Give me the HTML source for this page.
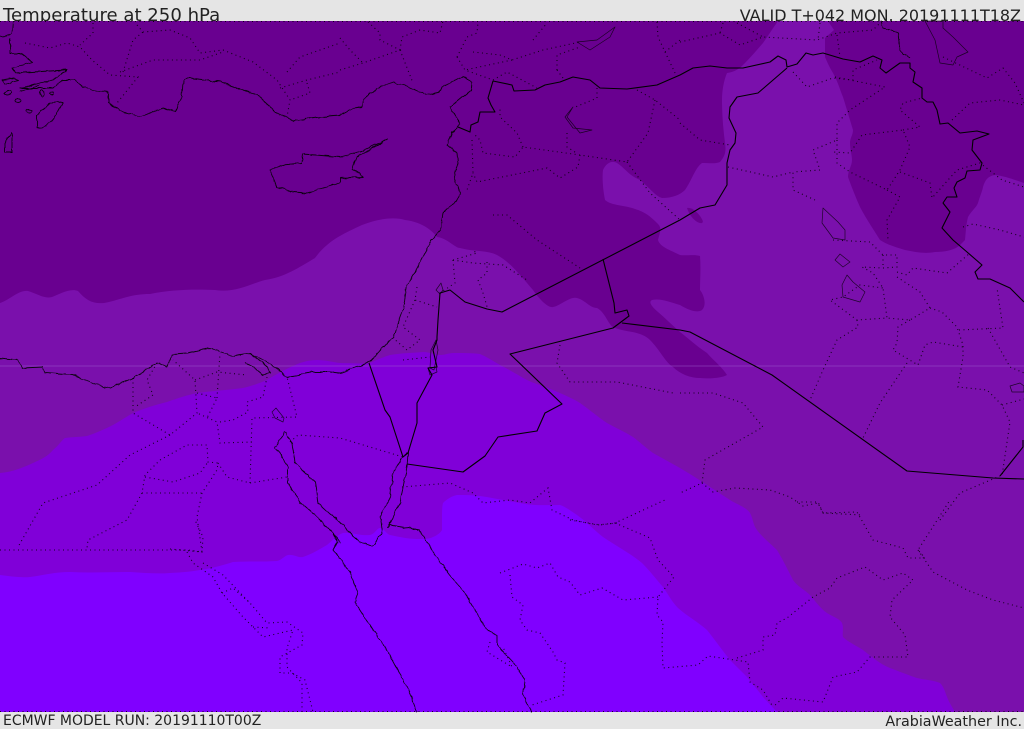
<!DOCTYPE html>
<html><head><meta charset="utf-8"><title>Temperature at 250 hPa</title>
<style>
html,body{margin:0;padding:0;background:#e5e5e5;width:1024px;height:729px;overflow:hidden}
svg{display:block}
text{font-family:"DejaVu Sans","Liberation Sans",sans-serif;fill:#222}
.c{fill:none;stroke:#000;stroke-width:.9;stroke-linejoin:round;stroke-opacity:.9}
.b{fill:none;stroke:#000;stroke-width:1.1;stroke-linejoin:round}
.l{fill:none;stroke:#000;stroke-width:.7;stroke-linejoin:round;stroke-opacity:.75}
.d{fill:none;stroke:#000;stroke-width:1.1;stroke-dasharray:1 3.5;stroke-opacity:.85}
</style></head><body>
<svg width="1024" height="729" viewBox="0 0 1024 729" xmlns="http://www.w3.org/2000/svg">
<defs><filter id="w" x="0" y="0" width="1024" height="729" filterUnits="userSpaceOnUse"><feTurbulence type="fractalNoise" baseFrequency=".14" numOctaves="2" seed="4"/><feDisplacementMap in="SourceGraphic" scale="3.5" xChannelSelector="R" yChannelSelector="G"/></filter></defs>
<rect width="1024" height="729" fill="#e5e5e5"/>
<text x="3" y="21" font-size="18.1">Temperature at 250 hPa</text>
<text x="1021" y="21" font-size="15.97" text-anchor="end">VALID T+042 MON. 20191111T18Z</text>
<text x="3" y="725" font-size="13.98">ECMWF MODEL RUN: 20191110T00Z</text>
<text x="1022" y="726" font-size="14.3" text-anchor="end">ArabiaWeather Inc.</text>
<rect x="0" y="21" width="1024" height="691" fill="#690090"/>
<path fill="#7a10ac" d="M0 303C10 300 18 290 28 291C38 294 44 299 52 297C60 294 70 288 78 291C86 300 92 304 104 303C120 300 130 294 150 294C170 290 190 289 215 290C235 293 250 284 265 280C285 277 298 268 315 258C328 240 345 233 362 225C380 218 395 217 405 220C420 222 430 228 437 237C447 238 455 248 460 248C475 252 487 250 497 255C510 262 520 275 533 290C540 300 548 308 553 307C560 306 570 296 577 298C585 300 590 308 597 308C605 312 608 324 613 327C625 333 640 330 650 340C660 350 665 362 673 367C680 374 690 378 700 378C710 379 722 378 727 375C722 367 715 362 707 353C695 345 688 338 680 332C672 325 665 318 658 312C652 307 648 302 652 300C660 298 670 302 680 305C690 311 698 313 702 310C707 305 704 295 700 290C700 280 701 268 700 256C695 254 685 256 680 255C670 250 660 247 658 240C660 232 662 228 658 224C650 216 645 212 635 209C625 205 612 206 605 200C603 190 602 178 603 170C606 163 612 160 617 163C625 168 628 175 640 180C650 188 655 196 662 198C672 198 680 195 685 190C692 180 695 168 702 163C710 163 715 164 720 162C726 155 726 150 725 143C723 128 722 112 722 100C722 90 724 80 727 73C735 72 740 68 743 65C750 58 757 50 763 43C768 36 773 28 778 21L828 21L834 30L825 38L825 57C828 64 830 68 833 73C838 82 840 90 843 97C847 110 850 120 853 130C853 135 850 138 850 143C850 150 852 155 852 160C852 166 848 170 848 177C852 188 856 198 860 207C868 222 874 230 880 240C888 245 895 247 905 250C915 252 925 254 935 252C945 252 955 250 960 245L965 240C966 230 966 225 968 217C972 210 976 208 978 203C980 196 982 192 983 187C985 180 988 176 995 175C1005 176 1015 180 1024 183L1024 712L0 712Z"/>
<path fill="#690090" d="M687 208C692 207 697 212 700 216C702 219 704 222 702 223C697 224 690 217 687 208Z"/>
<path fill="#8000d8" d="M0 473C12 472 22 468 33 463C42 459 48 456 53 450C58 446 62 440 65 438C72 437 80 437 87 436C96 433 105 429 113 425C120 421 126 417 133 413C145 408 155 405 167 402C178 398 188 395 197 393C212 391 228 390 243 388C252 386 260 383 267 380C278 373 290 367 300 363C306 361 311 360 317 360C325 360 332 362 340 363C350 363 360 364 370 363C377 360 383 357 390 355C402 353 412 353 423 352C430 352 435 355 440 355C445 355 449 353 453 353C462 353 472 353 480 354C487 357 493 361 500 365C510 370 518 375 527 380C535 384 544 386 553 390C562 394 572 398 580 403C590 410 598 417 607 423C616 428 625 432 633 437C640 442 646 448 653 453C662 458 671 463 680 468C697 478 713 489 730 500C738 505 746 507 750 513C753 518 753 525 757 530C763 538 770 543 777 550C783 560 788 570 793 580C798 587 805 590 810 595C816 602 821 609 827 613C833 617 839 618 842 623C844 628 842 633 843 637C848 642 857 646 863 650C872 657 880 664 890 668C898 671 908 675 917 678C925 680 933 680 940 683C944 687 945 692 947 697C949 702 952 707 955 712L0 712Z"/>
<path fill="#8000ff" d="M0 575C10 576 20 578 30 577C45 575 55 572 70 572C90 573 110 572 130 572C145 573 158 574 170 573C195 572 215 568 233 562C248 561 262 562 277 561C282 560 284 556 288 555C294 554 298 558 303 557C312 554 320 549 327 545C333 540 337 535 343 533C352 532 360 536 370 535C375 534 377 528 380 528C384 528 386 534 390 535C400 537 408 539 417 539C424 539 430 539 433 537C438 535 441 532 442 530L442 520C442 512 442 507 443 503C447 499 452 496 457 495C465 495 472 495 480 496C494 498 507 501 520 503C534 506 547 505 560 505C566 507 571 511 577 515C587 522 595 531 603 537C616 546 630 553 642 563C650 571 656 579 663 587C668 594 672 602 678 608C687 616 698 622 707 630C715 640 722 650 730 660C736 666 741 671 747 677C752 684 758 690 763 697L777 712L0 712Z"/>
<rect x="0" y="365.5" width="1024" height="1" fill="#a060d0" opacity=".45"/>
<g class="d">
<path d="M0 21.5H1024M0 711.5H1024"/>
<path d="M25 43L50 48L67 43L80 47L92 60L110 75L138 77L117 103M93 23V33L80 45M137 25L143 32L170 30L190 38L200 53L223 50L253 62L277 80L290 100L287 117M123 72L133 40L143 32M120 72L153 60L200 60L223 52M287 72L300 57L340 43M280 88L307 80L340 72M307 83L310 93L290 100"/>
<path d="M340 70L363 63L400 50L380 40V33L368 22M400 50L402 37L420 30L440 33L443 21M400 50L413 83M340 38L350 50L363 63M457 57L467 37L477 33L478 22M457 57L465 70L493 80L507 72L537 88M473 52L500 55L512 60L543 50L580 42M512 60L465 70M557 70V55L580 47M533 40L547 23M563 78L557 70M597 88V98L573 108M637 90L655 100L680 120M655 100L648 133L627 162L580 155L523 147L515 157L483 153L480 140L475 135M523 147L517 133L500 117V107M472 140L473 173L467 190M580 155L578 167L560 178L547 168L477 182L473 173M567 133V147L578 154M627 162L650 193L680 220M657 22L658 37L675 73M665 52L680 40M493 215H507L537 240L580 268"/>
<path d="M680 42L720 33L740 45L763 37L817 40L837 33L873 30L880 23M723 23L720 33M737 23L763 37M837 35L840 57M820 23L818 40M793 72L807 87L833 78L853 80V70L877 60M835 77L885 87L850 110L837 123V140L813 150L820 170L793 172M728 167L773 177L793 172V190L815 200M837 140V163L850 172L887 190L900 170L910 147L903 130L862 135L850 153L833 152M903 130L920 127L900 110L903 103L922 98M952 120L970 103L1000 100L1024 105M887 190L900 197L887 220L888 240M900 172L930 183L932 198L957 170L980 163L1002 180L1024 187M943 57L987 78L1003 68L1015 83L1024 103M963 227L973 224L1000 230L1024 237M680 123L700 140L730 145"/>
<path d="M833 240L870 242L883 255H897V267L883 268L862 267L873 273L883 288L887 318L857 320L830 300L843 297L860 285L883 288M883 255V268M897 272L907 275L913 268L947 273L970 253M897 277L920 292L930 308L910 320L887 318M930 308L942 312L957 327L963 345V357L958 387L987 390L1002 405L1010 422L1002 476M910 320L898 327L897 343L893 350L918 365L925 345L933 342L963 347M907 363L880 403L862 440M857 320L858 327L837 340L823 370L810 400M959 330L1003 328L997 288M988 328L1010 367L1024 373M1002 405L1024 399M680 393H713L743 403L763 427L705 460L702 483L680 493M702 483L713 492L735 488L770 490L790 497L803 506L818 503L823 513L862 515M940 520L960 493L1000 476M560 345L557 363L570 382L617 382L673 393"/>
<path d="M570 520L600 525L615 523L665 500M615 523L650 538L658 560L674 577L658 597L657 615L663 622L662 643L663 668L698 665L708 656L748 662L750 682L763 690L773 707M658 597L623 600L602 588L580 595L570 582M737 658L763 650V637L775 635L777 623L787 618L813 597L830 588L837 578L865 567L883 580L903 573L913 580L892 600L890 617L905 635L908 657H870L857 672L833 677L823 702L783 698L773 707M797 502H818L823 513L857 512L873 540L903 548L908 558H925L918 550L950 500M918 550L933 572L967 590L993 600L1024 608"/>
<path d="M170 549L202 552L203 537L195 520M187 552L193 563L213 577L222 593L243 617L263 637L293 630L287 648V667L302 683V712M203 563L223 575L250 603L267 623L287 622L303 633L302 645L280 657V673L292 673L305 680L313 712M222 593L233 588L250 603M253 627L270 628M490 642L487 652L512 667L503 647M500 573L523 564L537 568L550 563L558 577L570 582M510 575L512 597L523 605L520 620L527 630L540 633L553 652L557 660L565 663L563 695L532 705"/>
<path d="M133 378V413L170 435L197 413L195 380L173 360M157 363L147 380L153 395L135 407M170 435L130 455L97 485L43 503L18 547M0 550H188L202 552L197 517L202 493L217 470L218 463L208 462L207 445H187L160 460L145 475L142 493L127 520L88 540L87 548M145 477L173 482L200 473L208 462M142 493H202M218 463L227 477L250 483L287 477M250 483L252 418L297 417L287 377M252 442L220 443L217 422L197 413M220 422L233 420L248 412L247 402L263 397L267 377M217 398L220 353M197 393L217 398L207 418M195 380L217 372L247 375M290 442L298 435L340 438L403 457"/>
<path d="M402 487L450 483L473 493L483 503L510 500L530 503L548 488L552 510L573 520L597 525L617 523M417 287L415 300L437 307M415 300L403 327L420 340L407 350L393 338M403 360L430 357M453 260L455 283L440 293M453 260L473 263L503 265L527 280M487 262V273L478 280L483 293L488 310M453 260L477 253L472 250"/>
</g>
<g class="c" filter="url(#w)">
<path d="M13 21L12 33L3 37L0 36M10 38L10 53L20 53L32 62L13 68L15 73L67 70L53 80L20 88L53 88L63 80L75 80L83 87L95 90L108 92V103L122 112L140 117L163 108L175 112L182 97L183 80L190 78L220 82L257 95L277 113L293 121L317 117L340 115L353 108L362 107L363 100L377 88L393 82L407 86L427 95L440 92L442 87L463 76L472 83L471 90L450 107L460 123L457 128L452 132L447 145L457 153L458 163L454 177L460 193L457 200L443 213L440 230L432 240L415 272L407 285L403 310L393 337L370 362L340 373L330 372L313 372L287 377L272 365L250 353L233 356L210 348L187 353L173 354L167 367L157 363L133 378L110 388L93 383L72 375L45 373L43 367L23 368L17 360L0 358"/>
<path d="M270 170L283 165L302 163L303 154L340 157L360 152L388 139L357 157L353 168L363 177L340 178V183L307 193L293 192L277 187Z"/>
<path d="M63 102L50 103L37 115V127L42 128L53 120ZM12 132L5 143V152H12ZM18 80L5 84L2 80L14 78ZM20 91L40 85"/>
<ellipse cx="8" cy="93" rx="3" ry="2"/><ellipse cx="18" cy="101" rx="3" ry="2"/><ellipse cx="29" cy="111" rx="3" ry="1.5"/><ellipse cx="42" cy="93" rx="2" ry="3"/><ellipse cx="52" cy="93" rx="2" ry="1.5"/>
<path d="M245 362L257 370L263 375L270 373L268 367L250 353"/>
<path d="M285 432L275 447L288 467V483L300 502L313 513L333 533L340 543M285 432L292 443L295 463L315 482L318 503L340 523L360 542L372 546L380 535L382 533L380 517L390 497L393 473L403 457L408 453L407 467L400 503L388 528L390 525L420 530L433 552L450 575L463 590L487 630L497 635V645L513 662L525 680L523 695L532 712"/>
<path d="M333 533L337 542L333 550L350 572L358 592L355 602L373 630L390 655L410 693L417 712"/>
<path d="M881 21L883 28L898 33L900 50L910 58"/>
</g>
<g class="b">
<path d="M458 127L470 132L471 125L478 122L480 112H495L491 105L488 98L493 81L512 85L514 91L535 90L545 85L560 82L573 77L590 80L600 88L627 89L657 85L680 75L693 68L710 66L727 68L743 68L770 62L778 56L786 60L787 67L797 64L806 53L813 55L823 53L843 59L860 62L873 56L882 60L880 68L886 73L900 63L910 63V68L915 72L913 82L922 88V98L927 102H933L937 110L940 124L948 123L960 133L977 131L989 134L973 140L972 150L982 163L980 170L967 171L965 178L957 182L954 188L957 197H947L943 203L950 212L942 228L953 240L967 252L982 265L975 272L978 279H990L1010 288L1024 302"/>
<path d="M787 68L758 93L737 97L730 107L729 118L736 133L735 143L730 150L727 163V185L715 205L700 208L680 220L502 312L487 309L465 302L450 290L440 293L438 320L437 337V340L433 350L437 367L428 368L432 375L417 403V423L408 453L403 457L390 417L385 410L369 363"/>
<path d="M407 464L463 472L485 456L498 437L537 431L545 413L562 404L510 354L613 328L629 316L627 310L615 313L614 303L603 259M622 323L680 330L690 332L772 375L907 471L993 478L1024 479M1000 476L1023 447V440"/>
</g>
<g class="l">
<path d="M573 107L565 117L573 128L592 130L580 133L567 117ZM615 27L597 40L577 42L590 50L610 37ZM925 21L935 40L940 63L953 65L957 57L968 52L953 37L943 28V21ZM436 340L431 350L430 368L434 370L438 350ZM428 368L430 375L437 372L436 367ZM436 290L441 283L443 290L440 294ZM835 260L840 254L850 262L843 267ZM847 275L842 285L843 297L860 302L865 292L853 282ZM823 208L822 223L833 238L845 240V230L838 222ZM272 412L276 408L284 418L283 422L275 418ZM1010 386L1020 383L1024 386V392L1012 392Z"/>
</g>
</svg>
</body></html>
